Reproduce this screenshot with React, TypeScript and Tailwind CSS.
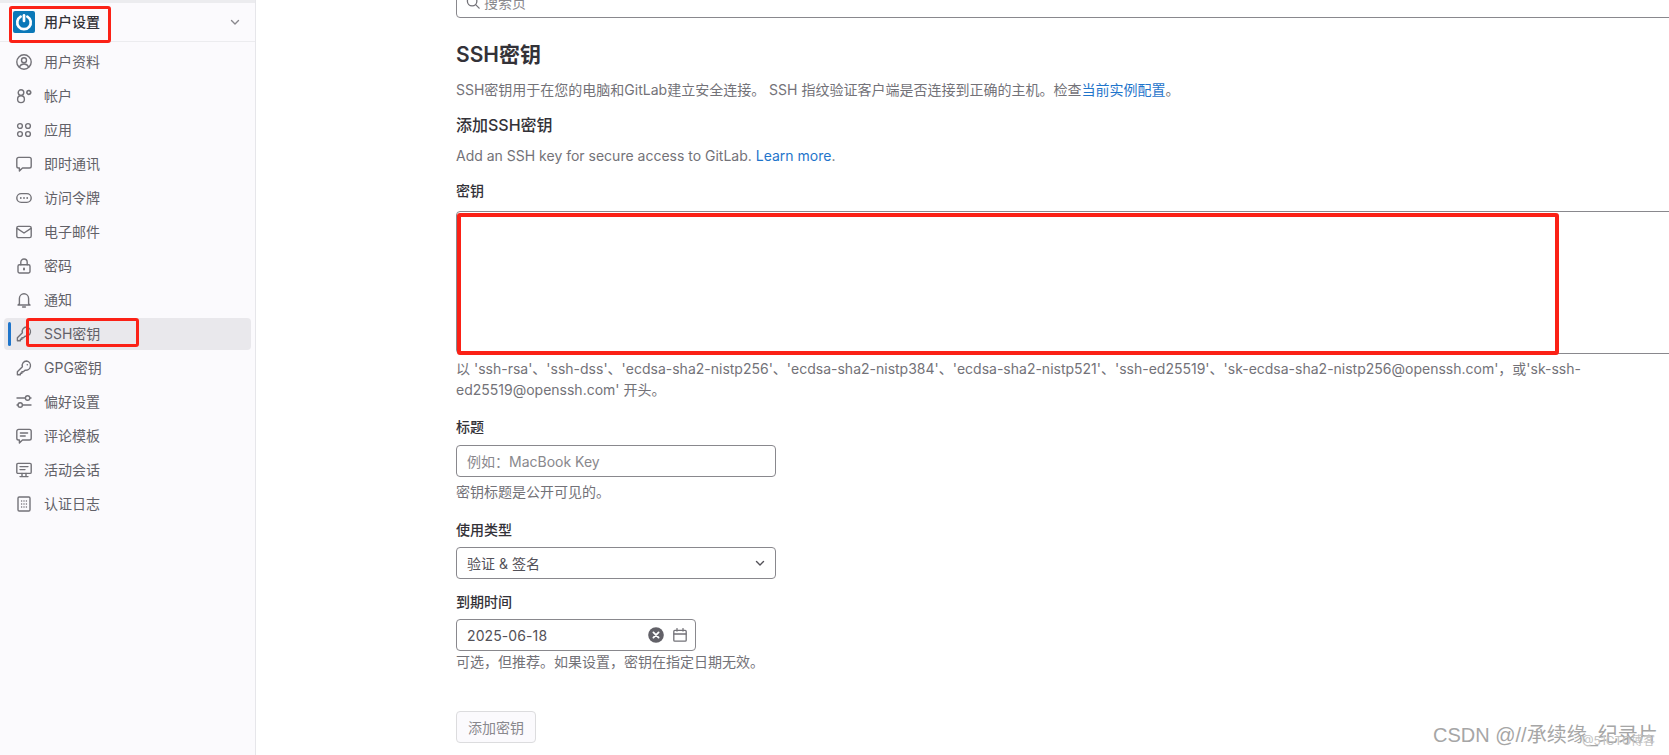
import React from "react";

const FONT = "font-['Inter','Noto_Sans_CJK_SC',sans-serif]";

function I({ children }: { children: React.ReactNode }) {
  return (
    <svg width="16" height="16" viewBox="0 0 16 16" fill="none" stroke="#737278" strokeWidth="1.4" strokeLinecap="round" strokeLinejoin="round" className="shrink-0">
      {children}
    </svg>
  );
}

const KEY = "M10.6 1a4.4 4.4 0 0 0-4.2 5.8L1.4 11.8v3h3v-1.5h1.5v-1.5h1.5l1.6-1.6A4.4 4.4 0 1 0 10.6 1z";

const items: { label: string; icon: React.ReactNode; active?: boolean }[] = [
  { label: "用户资料", icon: <I><circle cx="8" cy="8" r="7.2" /><circle cx="8" cy="6.2" r="2.5" /><path d="M3.4 13c1-2.2 2.6-3 4.6-3s3.6.8 4.6 3" /></I> },
  { label: "帐户", icon: <I><circle cx="5" cy="4.6" r="2.8" /><circle cx="5" cy="11.2" r="3.4" /><circle cx="12.8" cy="4.4" r="1.9" strokeWidth="1.7" strokeDasharray="1.6 0.6" /></I> },
  { label: "应用", icon: <I><circle cx="4" cy="4" r="2.4" /><circle cx="12" cy="4" r="2.4" /><circle cx="4" cy="12" r="2.4" /><circle cx="12" cy="12" r="2.4" /></I> },
  { label: "即时通讯", icon: <I><path d="M2.6 1.4h10.8a1.8 1.8 0 0 1 1.8 1.8v7a1.8 1.8 0 0 1-1.8 1.8H6.5L3.4 15v-3h-.8A1.8 1.8 0 0 1 .8 10.2v-7a1.8 1.8 0 0 1 1.8-1.8z" /></I> },
  { label: "访问令牌", icon: <I><rect x="0.8" y="3.6" width="14.4" height="8.8" rx="4.4" /><path d="M4.8 8h.01M8 8h.01M11.2 8h.01" strokeWidth="1.8" /></I> },
  { label: "电子邮件", icon: <I><rect x="0.8" y="2.4" width="14.4" height="11.2" rx="1.6" /><path d="M1 4.4l7 4.6 7-4.6" /></I> },
  { label: "密码", icon: <I><rect x="2" y="6.8" width="12" height="8.2" rx="1.4" /><path d="M4.8 6.8V4.2a3.2 3.2 0 0 1 6.4 0v2.6" /><path d="M8 10.6v.8" strokeWidth="2" /></I> },
  { label: "通知", icon: <I><path d="M3.4 11.8V6.4a4.6 4.6 0 0 1 9.2 0v5.4l1.4 1.2H2l1.4-1.2z" /><path d="M6.6 15h2.8" /></I> },
  { label: "SSH密钥", active: true, icon: <I><path d={KEY} /><path d="M11.3 4.7h.01" strokeWidth="1.6" /></I> },
  { label: "GPG密钥", icon: <I><path d={KEY} /><path d="M11.3 4.7h.01" strokeWidth="1.6" /></I> },
  { label: "偏好设置", icon: <I><circle cx="11.6" cy="4" r="2.2" /><circle cx="4.2" cy="11" r="2.2" /><path d="M1 4h8.2M14 4h1M6.6 11H15M1 11h1" /></I> },
  { label: "评论模板", icon: <I><path d="M2.6 1.4h10.8a1.8 1.8 0 0 1 1.8 1.8v7a1.8 1.8 0 0 1-1.8 1.8H6.5L3.4 15v-3h-.8A1.8 1.8 0 0 1 .8 10.2v-7a1.8 1.8 0 0 1 1.8-1.8z" /><path d="M4.4 5h7.2M4.4 8h4.8" /></I> },
  { label: "活动会话", icon: <I><rect x="0.8" y="1.4" width="14.4" height="10" rx="1.2" /><path d="M4 4.6h8M4 7.6h5M6 11.4v3M10 11.4v3M4 14.6h8" /></I> },
  { label: "认证日志", icon: <I><rect x="2" y="1" width="12" height="14" rx="1.2" /><path d="M5.6 5h.01M8 5h.01M10.4 5h.01M5.6 8h.01M8 8h.01M10.4 8h.01M5.6 11h.01M8 11h.01M10.4 11h.01" strokeWidth="1.5" /></I> },
];

function Chevron({ color = "#737278", size = 12 }: { color?: string; size?: number }) {
  return (
    <svg width={size} height={size} viewBox="0 0 12 12" fill="none" stroke={color} strokeWidth="1.4" strokeLinecap="round" strokeLinejoin="round">
      <path d="M2.5 4.5L6 8l3.5-3.5" />
    </svg>
  );
}

export default function App() {
  return (
    <div className={`${FONT} relative flex h-[755px] w-[1669px] overflow-hidden bg-white text-[14px] text-[#737278]`}>
      <aside className="w-[256px] shrink-0 border-r border-[#e6e6ea] bg-[#fbfafd]">
        <div className="h-[3px] bg-[#ececef]" />
        <div className="flex h-[39px] items-center border-b border-[#ececef] pl-[13px] pr-[14px]">
          <div className="flex h-[22px] w-[22px] items-center justify-center rounded-[2px] bg-[#0b78b8]">
            <svg width="18" height="18" viewBox="0 0 16 16" fill="none" stroke="#fff" strokeWidth="2.4" strokeLinecap="round">
              <path d="M5 3.2a6 6 0 1 0 6 0" />
              <path d="M8 2v5" />
            </svg>
          </div>
          <span className="ml-[9px] font-medium leading-5 text-[#333238]">用户设置</span>
          <span className="ml-auto flex"><Chevron color="#89888d" size={12} /></span>
        </div>
        <nav className="mt-[4px] flex flex-col gap-[2px] px-[4px]">
          {items.map((it) => (
            <div key={it.label} className={`relative flex h-[32px] items-center rounded-[4px] pl-[12px] text-[#626168] ${it.active ? "bg-[#e9e8ec]" : ""}`}>
              {it.active && <span className="absolute left-[4px] top-[4px] h-[24px] w-[3px] rounded-full bg-[#1f75cb]" />}
              {it.icon}
              <span className="ml-[12px] leading-5">{it.label}</span>
            </div>
          ))}
        </nav>
      </aside>

      <main className="ml-[200px] w-[1300px] shrink-0">
        <div className="-mt-[14px] flex h-[32px] items-center rounded-[4px] border border-[#89888d] pl-[9px]">
          <svg width="14" height="14" viewBox="0 0 16 16" fill="none" stroke="#737278" strokeWidth="1.5" strokeLinecap="round"><circle cx="7" cy="7" r="5.4" /><path d="M11 11l4 4" /></svg>
          <span className="ml-[4px] text-[#89888d]">搜索页</span>
        </div>
        <h1 className="mt-[23px] text-[21px] font-semibold leading-[28px] text-[#333238]">SSH密钥</h1>
        <p className="mt-[11px] leading-5">SSH密钥用于在您的电脑和GitLab建立安全连接。 SSH 指纹验证客户端是否连接到正确的主机。检查<span className="text-[#1f75cb]">当前实例配置</span>。</p>
        <h2 className="mt-[13px] text-[16px] font-medium leading-6 text-[#333238]">添加SSH密钥</h2>
        <p className="mt-[9px] leading-5">Add an SSH key for secure access to GitLab. <span className="text-[#1f75cb]">Learn more</span>.</p>

        <label className="mt-[15px] block font-medium leading-5 text-[#333238]">密钥</label>
        <textarea readOnly className="mt-[10px] block h-[143px] w-full resize-none rounded-[4px] border border-[#89888d] bg-white outline-none" />
        <p className="mt-[4px] w-[1135px] leading-[21px]">以 'ssh-rsa'、'ssh-dss'、'ecdsa-sha2-nistp256'、'ecdsa-sha2-nistp384'、'ecdsa-sha2-nistp521'、'ssh-ed25519'、'sk-ecdsa-sha2-nistp256@openssh.com'，或'sk-ssh-ed25519@openssh.com' 开头。</p>

        <label className="mt-[17px] block font-medium leading-5 text-[#333238]">标题</label>
        <input readOnly placeholder="例如：MacBook Key" className="mt-[8px] block h-[32px] w-[320px] rounded-[4px] border border-[#89888d] px-[10px] text-[14px] outline-none placeholder:text-[#89888d]" />
        <p className="mt-[5px] leading-5">密钥标题是公开可见的。</p>

        <label className="mt-[18px] block font-medium leading-5 text-[#333238]">使用类型</label>
        <div className="mt-[7px] flex h-[32px] w-[320px] items-center justify-between rounded-[4px] border border-[#89888d] pl-[10px] pr-[9px] text-[#535158]">
          <span>验证 &amp; 签名</span>
          <Chevron color="#535158" />
        </div>

        <label className="mt-[13px] block font-medium leading-5 text-[#333238]">到期时间</label>
        <div className="mt-[7px] flex h-[32px] w-[240px] items-center rounded-[4px] border border-[#89888d] pl-[10px] pr-[8px] text-[#535158]">
          <span className="tracking-[0.1px]">2025-06-18</span>
          <svg className="ml-auto" width="16" height="16" viewBox="0 0 16 16">
            <circle cx="8" cy="8" r="7.8" fill="#626168" />
            <path d="M5.4 5.4l5.2 5.2M10.6 5.4l-5.2 5.2" stroke="#fff" strokeWidth="1.8" strokeLinecap="round" />
          </svg>
          <svg className="ml-[9px]" width="14" height="14" viewBox="0 0 14 14" fill="none" stroke="#737278" strokeWidth="1.3" strokeLinecap="round">
            <rect x="0.8" y="2.4" width="12.4" height="10.8" rx="1" />
            <path d="M1 6h12M4 .6v2.4M10 .6v2.4" />
          </svg>
        </div>
        <p className="mt-[1px] leading-5">可选，但推荐。如果设置，密钥在指定日期无效。</p>

        <button className="mt-[39px] block h-[32px] w-[80px] rounded-[4px] border border-[#dcdcde] bg-[#fbfafd] text-[14px] text-[#89888d]">添加密钥</button>
      </main>

      <div className="pointer-events-none absolute left-[9px] top-[6px] h-[37px] w-[102px] rounded-[3px] border-[3px] border-[#fb2116]" />
      <div className="pointer-events-none absolute left-[26px] top-[318px] h-[29px] w-[113px] rounded-[3px] border-[3px] border-[#fb2116]" />
      <div className="pointer-events-none absolute left-[457px] top-[213px] h-[142px] w-[1102px] rounded-[3px] border-[4px] border-[#fb2116]" />

      <div className="pointer-events-none absolute left-[1433px] top-[723px] whitespace-nowrap font-['Liberation_Sans','Noto_Sans_CJK_SC',sans-serif] text-[20px] leading-6 text-[#a6a6a6]">CSDN @//承续缘_纪录片</div>
      <div className="pointer-events-none absolute left-[1582px] top-[733px] whitespace-nowrap text-[12px] leading-4 text-[#c4c4c4]">@51CTO博客</div>
    </div>
  );
}
